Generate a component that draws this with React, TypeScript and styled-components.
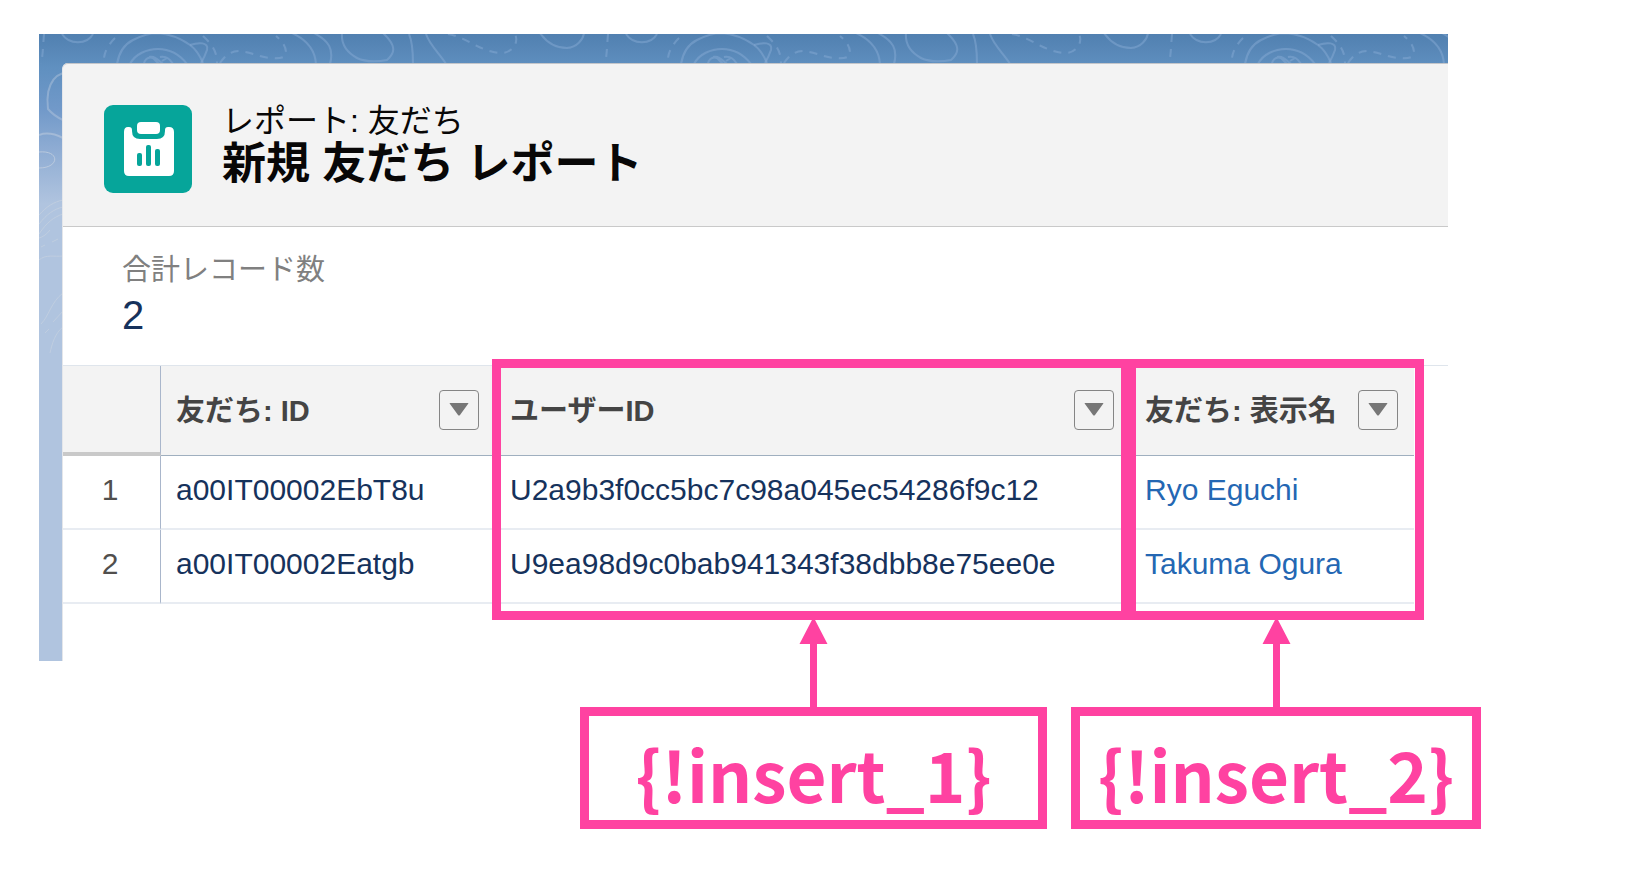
import React from "react";
import styled, { createGlobalStyle } from "styled-components";

const PINK = "#ff42a1";

const GlobalStyle = createGlobalStyle`
  *, *::before, *::after { box-sizing: border-box; }
  body {
    margin: 0;
    background: #ffffff;
    font-family: "Liberation Sans", "Noto Sans CJK JP", sans-serif;
    font-size: 30px;
    color: #16325c;
  }
`;

const Page = styled.main`
  padding: 34px 190px 218px 39px;
`;

const Desktop = styled.section`
  position: relative;
  padding: 29px 0 0 23px;
  min-width: 1409px;
  background: linear-gradient(#5180b0 0, #6090c0 34px, #7199c9 75px, #8eacd3 115px, #b0c4df 170px);
`;

const Topography = styled.svg`
  position: absolute;
  inset: 0;
  width: 100%;
  height: 100%;
`;

const Card = styled.div`
  position: relative;
  border-left: 1px solid #e4e6ea;
  border-top-left-radius: 6px;
  background: #ffffff;
`;

const Header = styled.header`
  display: flex;
  align-items: center;
  gap: 30px;
  padding: 41px 0 33px 41px;
  border-top: 1px solid #c4c6ca;
  border-bottom: 1px solid #c9c9c9;
  border-top-left-radius: 5px;
  background: #f3f3f3;
  color: #080707;
`;

const ReportIcon = styled.svg`
  flex: none;
  width: 88px;
  height: 88px;
`;

const Titles = styled.div`
  padding-bottom: 2px;
`;

const Kind = styled.p`
  margin: 0;
  font-size: 32px;
  line-height: 32px;
`;

const Title = styled.h1`
  margin: 0;
  font-size: 44px;
  line-height: 54px;
`;

const Summary = styled.dl`
  margin: 0;
  padding: 25px 59px 26px;
  border-bottom: 1px solid #dfe5ec;
`;

const SummaryLabel = styled.dt`
  font-size: 29px;
  line-height: 36px;
  color: #808080;
`;

const SummaryValue = styled.dd`
  margin: 3px 0 0;
  font-size: 40px;
  line-height: 48px;
`;

const TableArea = styled.div`
  position: relative;
  padding-bottom: 57px;
`;

const Table = styled.table`
  table-layout: fixed;
  width: 1351px;
  border-collapse: separate;
  border-spacing: 0;
`;

const Column = styled.col<{ $width: number }>`
  width: ${(p) => p.$width}px;
`;

const HeadCell = styled.th`
  height: 90px;
  padding: 0 16px 2px 15px;
  border-bottom: 1px solid #9fafbf;
  background: #f3f3f3;
  color: #444444;
  font-size: 29px;
  text-align: left;
`;

const CornerCell = styled.td`
  border-right: 1px solid #a9b6cb;
  border-bottom: 4px solid #c9c9c9;
  background: #f3f3f3;
`;

const HeadContent = styled.div`
  display: flex;
  align-items: center;
  justify-content: space-between;
  white-space: nowrap;
`;

const HeadLabel = styled.span`
  padding-bottom: 3px;
`;

const MenuButton = styled.button`
  display: flex;
  align-items: center;
  justify-content: center;
  width: 40px;
  height: 40px;
  padding: 0;
  border: 1px solid #858585;
  border-radius: 4px;
  background: transparent;
`;

const Cell = styled.td`
  height: 74px;
  padding: 0 15px 4px;
  border-bottom: 2px solid #e8ecf2;
  white-space: nowrap;
`;

const NumberCell = styled.th`
  padding: 0 3px 4px 0;
  border-right: 1px solid #a9b6cb;
  border-bottom: 2px solid #e8ecf2;
  color: #514f4d;
  font-weight: 400;
  text-align: center;
`;

const RecordLink = styled.a`
  color: #2467b3;
  text-decoration: none;
`;

/* Annotation frames lie over the table columns. */
const Highlight = styled.div<{ $left: number; $width: number }>`
  position: absolute;
  top: -7px;
  left: ${(p) => p.$left}px;
  width: ${(p) => p.$width}px;
  height: 261px;
  border: 9px solid ${PINK};
  pointer-events: none;
`;

const Callout = styled.div<{ $left: number; $width: number }>`
  position: absolute;
  top: 254px;
  left: ${(p) => p.$left}px;
  width: ${(p) => p.$width}px;
  display: flex;
  flex-direction: column;
  align-items: center;
`;

const Arrow = styled.svg`
  display: block;
  width: 29px;
  height: 87px;
`;

const CalloutBox = styled.div`
  width: 100%;
  padding: 17px 0 7px;
  border: 9px solid ${PINK};
  background: #ffffff;
`;

const CalloutText = styled.div`
  color: ${PINK};
  font-family: "Noto Sans CJK JP", sans-serif;
  font-size: 69px;
  font-weight: 700;
  line-height: 80px;
  text-align: center;
  white-space: nowrap;
`;

const columns = ["友だち: ID", "ユーザーID", "友だち: 表示名"];

const rows = [
  { id: "a00IT00002EbT8u", user: "U2a9b3f0cc5bc7c98a045ec54286f9c12", name: "Ryo Eguchi" },
  { id: "a00IT00002Eatgb", user: "U9ea98d9c0bab941343f38dbb8e75ee0e", name: "Takuma Ogura" },
];

function TopographyArt() {
  return (
    <Topography aria-hidden="true">
      <defs>
        <pattern id="contours" width="564" height="30" patternUnits="userSpaceOnUse">
          <g fill="none" stroke="#86a9d3" strokeWidth="2" strokeOpacity="0.5">
            <path d="M23 0C30 11 48 11 54 0" />
            <path d="M78 30C80 18 86 10 94 6C104 1 110 -1 118 -1C132 0 144 6 151 11C158 16 161 22 164 29" />
            <path d="M151 11C160 8 170 8 168 16Q166 22 162 29" />
            <path d="M91 30C96 20 108 15 119 15C131 15 141 21 148 30" />
            <path d="M105 29C107 23 113 22 116 26L120 30M110 23C117 22 120 27 124 30M121 23C129 22 131 26 134 30M123 27L128 24" />
            <path d="M253 -1C266 5 276 14 277 30" />
            <path d="M275 -1C290 7 295 15 291 30" />
            <path d="M303 -1C302 10 307 18 318 24C328 29 343 27 348 26C356 19 358 12 344 -1" />
            <path d="M370 0C374 9 374 20 374 30" />
            <path d="M387 0C391 12 402 21 407 30" />
            <path d="M501 -1C510 12 522 14 528 14C538 13 544 6 545 -1" />
            <g strokeDasharray="8 7">
              <path d="M5 0C4 12 4 20 2 30" />
              <path d="M76 4C68 12 64 20 65 30" />
              <path d="M164 2C176 13 178 20 178 30" />
              <path d="M181 29C187 20 193 17 201 17C211 18 221 23 231 24C240 25 247 24 247 19C247 12 243 7 237 2" />
              <path d="M409 0C430 4 442 19 464 19C474 18 480 8 476 0" />
            </g>
          </g>
        </pattern>
      </defs>
      <rect width="100%" height="30" fill="url(#contours)" />
      <g fill="none" stroke="#c3cfe0" strokeWidth="1" strokeOpacity="0.8">
        <path d="M24 39C4 46 9 74 9 75Q15 82 24 86" strokeWidth="2" strokeOpacity="0.4" />
        <path d="M0 101C8 98 18 101 24 104" strokeWidth="2" strokeOpacity="0.5" />
        <path d="M0 118C21 116 21 134 0 134" />
        <path d="M0 181C8 172 15 168 24 166M0 190C8 180 15 175 24 173M0 200C8 188 15 183 24 180M0 204C4 203 8 200 11 196" />
        <path d="M13 208L19 205M2 213L6 211M0 226C7 220 15 223 24 222" />
        <path d="M24 259C12 268 10 282 2 290M24 277L14 288M24 293C16 299 13 310 11 319M6 299L10 295" />
      </g>
    </Topography>
  );
}

function ColumnMenu({ label }: { label: string }) {
  return (
    <MenuButton type="button" aria-label={label}>
      <svg width="20" height="13" viewBox="0 0 20 13" aria-hidden="true">
        <path d="M1 0H19Q20 0 19 1L11 12Q10 13 9 12L1 1Q0 0 1 0Z" fill="#777777" />
      </svg>
    </MenuButton>
  );
}

function Note({ left, width, children }: { left: number; width: number; children: React.ReactNode }) {
  return (
    <Callout $left={left} $width={width}>
      <Arrow viewBox="0 0 29 87" aria-hidden="true">
        <path d="M14.500 -3L28.500 24H18V87H11V24H0.500Z" fill={PINK} />
      </Arrow>
      <CalloutBox>
        <CalloutText>{children}</CalloutText>
      </CalloutBox>
    </Callout>
  );
}

export default function App() {
  return (
    <Page>
      <GlobalStyle />
      <Desktop>
        <TopographyArt />
        <Card>
          <Header>
            <ReportIcon viewBox="0 0 88 88" aria-hidden="true">
              <rect width="88" height="88" rx="9" fill="#06a59a" />
              <rect x="33" y="17" width="23" height="12" rx="4" fill="#ffffff" />
              <path
                d="M24 22H25Q28 22 28 25V26Q28 34 36 34H53Q61 34 61 26V25Q61 22 64 22H65Q70 22 70 27V66Q70 71 65 71H25Q20 71 20 66V27Q20 22 24 22Z"
                fill="#ffffff"
              />
              <g fill="#06a59a">
                <rect x="33" y="48" width="5" height="13" rx="2" />
                <rect x="42" y="40" width="5" height="21" rx="2" />
                <rect x="51" y="44" width="5" height="17" rx="2" />
              </g>
            </ReportIcon>
            <Titles>
              <Kind>レポート: 友だち</Kind>
              <Title>新規 友だち レポート</Title>
            </Titles>
          </Header>
          <Summary>
            <SummaryLabel>合計レコード数</SummaryLabel>
            <SummaryValue>2</SummaryValue>
          </Summary>
          <TableArea>
            <Table>
              <colgroup>
                <Column $width={98} />
                <Column $width={334} />
                <Column $width={635} />
                <Column $width={284} />
              </colgroup>
              <thead>
                <tr>
                  <CornerCell />
                  {columns.map((name) => (
                    <HeadCell key={name} scope="col">
                      <HeadContent>
                        <HeadLabel>{name}</HeadLabel>
                        <ColumnMenu label={name} />
                      </HeadContent>
                    </HeadCell>
                  ))}
                </tr>
              </thead>
              <tbody>
                {rows.map((row, index) => (
                  <tr key={row.id}>
                    <NumberCell scope="row">{index + 1}</NumberCell>
                    <Cell>{row.id}</Cell>
                    <Cell>{row.user}</Cell>
                    <Cell>
                      <RecordLink href="#">{row.name}</RecordLink>
                    </Cell>
                  </tr>
                ))}
              </tbody>
            </Table>
            <Highlight $left={429} $width={638} />
            <Highlight $left={1064} $width={297} />
            <Note left={517} width={467}>{"{!insert_1}"}</Note>
            <Note left={1008} width={410}>{"{!insert_2}"}</Note>
          </TableArea>
        </Card>
      </Desktop>
    </Page>
  );
}
